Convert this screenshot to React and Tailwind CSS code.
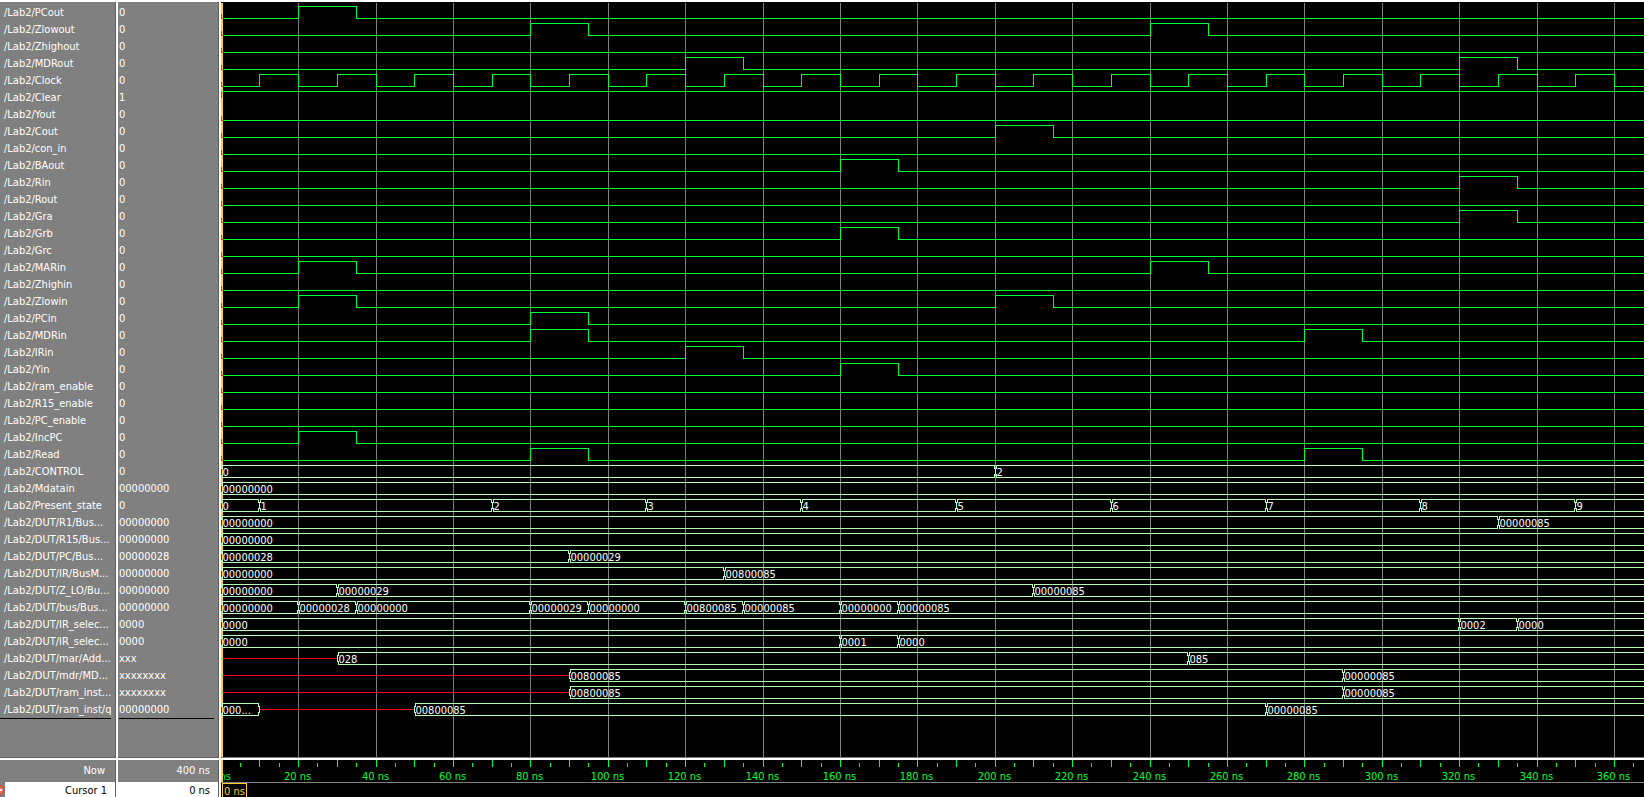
const X0 = 220.7;
const PX_PER_NS = 3.87;
const ROW = 17;
const END = 1100;

// Column of a time (in ns) on the plot, whose left edge is the cursor at 0 ns.
const tx = (t) => Math.round(X0 + PX_PER_NS * t) - 221;

const clockHigh = Array.from({ length: 30 }, (_, i) => [10 + i * 20, 20 + i * 20]);

const bit = (name, high = [], value = '0') => ({ name, value, kind: 'bit', high });
const bus = (name, value, segments) => ({ name, value, kind: 'bus', segments });

// A bus segment is [start in ns, text]; a null text means an undefined value.
const SIGNALS = [
  bit('/Lab2/PCout', [[20, 35]]),
  bit('/Lab2/Zlowout', [[80, 95], [240, 255]]),
  bit('/Lab2/Zhighout'),
  bit('/Lab2/MDRout', [[120, 135], [320, 335]]),
  bit('/Lab2/Clock', clockHigh),
  bit('/Lab2/Clear', [[0, END]], '1'),
  bit('/Lab2/Yout'),
  bit('/Lab2/Cout', [[200, 215]]),
  bit('/Lab2/con_in'),
  bit('/Lab2/BAout', [[160, 175]]),
  bit('/Lab2/Rin', [[320, 335]]),
  bit('/Lab2/Rout'),
  bit('/Lab2/Gra', [[320, 335]]),
  bit('/Lab2/Grb', [[160, 175]]),
  bit('/Lab2/Grc'),
  bit('/Lab2/MARin', [[20, 35], [240, 255]]),
  bit('/Lab2/Zhighin'),
  bit('/Lab2/Zlowin', [[20, 35], [200, 215]]),
  bit('/Lab2/PCin', [[80, 95]]),
  bit('/Lab2/MDRin', [[80, 95], [280, 295]]),
  bit('/Lab2/IRin', [[120, 135]]),
  bit('/Lab2/Yin', [[160, 175]]),
  bit('/Lab2/ram_enable'),
  bit('/Lab2/R15_enable'),
  bit('/Lab2/PC_enable'),
  bit('/Lab2/IncPC', [[20, 35]]),
  bit('/Lab2/Read', [[80, 95], [280, 295]]),
  bus('/Lab2/CONTROL', '0', [[0, '0'], [200, '2']]),
  bus('/Lab2/Mdatain', '00000000', [[0, '00000000']]),
  bus('/Lab2/Present_state', '0', [[0, '0'], [10, '1'], [70, '2'], [110, '3'], [150, '4'], [190, '5'], [230, '6'], [270, '7'], [310, '8'], [350, '9']]),
  bus('/Lab2/DUT/R1/Bus...', '00000000', [[0, '00000000'], [330, '00000085']]),
  bus('/Lab2/DUT/R15/Bus...', '00000000', [[0, '00000000']]),
  bus('/Lab2/DUT/PC/Bus...', '00000028', [[0, '00000028'], [90, '00000029']]),
  bus('/Lab2/DUT/IR/BusM...', '00000000', [[0, '00000000'], [130, '00800085']]),
  bus('/Lab2/DUT/Z_LO/Bu...', '00000000', [[0, '00000000'], [30, '00000029'], [210, '00000085']]),
  bus('/Lab2/DUT/bus/Bus...', '00000000', [[0, '00000000'], [20, '00000028'], [35, '00000000'], [80, '00000029'], [95, '00000000'], [120, '00800085'], [135, '00000085'], [160, '00000000'], [175, '00000085']]),
  bus('/Lab2/DUT/IR_selec...', '0000', [[0, '0000'], [320, '0002'], [335, '0000']]),
  bus('/Lab2/DUT/IR_selec...', '0000', [[0, '0000'], [160, '0001'], [175, '0000']]),
  bus('/Lab2/DUT/mar/Add...', 'xxx', [[0, null], [30, '028'], [250, '085']]),
  bus('/Lab2/DUT/mdr/MD...', 'xxxxxxxx', [[0, null], [90, '00800085'], [290, '00000085']]),
  bus('/Lab2/DUT/ram_inst...', 'xxxxxxxx', [[0, null], [90, '00800085'], [290, '00000085']]),
  bus('/Lab2/DUT/ram_inst/q', '00000000', [[0, '000...'], [10, null], [50, '00800085'], [270, '00000085']]),
];

function BitTrace({ high, y }) {
  const hi = y + 2;
  const lo = y + 14;
  const startsHigh = high[0]?.[0] === 0;
  let d = `M0 ${startsHigh ? hi : lo}`;
  for (const [a, b] of high) {
    if (a > 0) d += `H${tx(a)}V${hi}`;
    d += `H${tx(b)}`;
    if (b < END) d += `V${lo}`;
  }
  d += 'H9999';
  return (
    <>
      <path d={d} stroke="#00ff32" />
      <path d={startsHigh ? `M0 ${hi}V${hi + 6}` : `M0 ${lo - 5}V${lo}H2`} stroke="#ff3018" />
    </>
  );
}

function BusTrace({ segments, y }) {
  const hi = y + 2;
  const lo = y + 14;
  return segments.map(([start, text], i) => {
    const next = segments[i + 1];
    const a = tx(start);
    const b = next ? tx(next[0]) : 9999;
    if (text === null) {
      return (
        <g key={start}>
          <path d={`M${a} ${y + 8}H${b}`} stroke="#ff0010" />
          {start === 0 && <path d={`M0 ${y + 8}H2`} stroke="#00c830" />}
        </g>
      );
    }
    const l = a + 1;
    const r = b - 1;
    return (
      <g key={start}>
        <path
          d={`M${l} ${hi}V${hi + 3}M${l - 1} ${hi + 3}V${lo - 3}M${l} ${lo - 3}V${lo}M${l} ${hi}H${r}M${l} ${lo}H${r}M${r} ${hi}V${hi + 3}M${r + 1} ${hi + 3}V${lo - 3}M${r} ${lo - 3}V${lo}`}
          stroke="#b4ffb4"
          strokeLinecap="square"
        />
        {start === 0 && <path d={`M0 ${hi + 3}V${lo - 3}`} stroke="#4030c0" />}
        <text x={a + 1} y={y + 12} fill="#fff" stroke="none">{text}</text>
      </g>
    );
  });
}

function Plot() {
  const grid = Array.from({ length: 40 }, (_, i) => tx((i + 1) * 20));
  return (
    <svg className="block h-full w-full" role="img" aria-label="Waveforms" fontSize="11" fill="none" shapeRendering="crispEdges">
      <g transform="translate(0.5 0.5)">
        {grid.map((x) => (
          <path key={x} d={`M${x} 0V9999`} stroke="#808080" />
        ))}
        <rect x="-0.5" y="0.5" width="2" height="9999" fill="#ffcf26" />
        {SIGNALS.map((s, i) =>
          s.kind === 'bit' ? (
            <BitTrace key={i} high={s.high} y={2 + i * ROW} />
          ) : (
            <BusTrace key={i} segments={s.segments} y={2 + i * ROW} />
          ),
        )}
      </g>
    </svg>
  );
}

function Ruler() {
  const ticks = Array.from({ length: 120 }, (_, i) => i + 1);
  const labels = Array.from({ length: 19 }, (_, i) => i * 20);
  return (
    <svg className="block h-full w-full" role="img" aria-label="Time scale" fontSize="11" fill="none" shapeRendering="crispEdges">
      <g transform="translate(0.5 0)">
        {ticks.map((i) => (
          <path key={i} d={i % 2 ? `M${tx(i * 5)} 3V7` : `M${tx(i * 5)} 0V7`} stroke="#00ff32" />
        ))}
        {labels.map((t) => (
          <text key={t} x={tx(t) - 1} y="20" textAnchor="middle" fill="#00ff32">{`${t} ns`}</text>
        ))}
      </g>
      <rect x="0" y="0" width="2" height="22" fill="#ffcf26" />
    </svg>
  );
}

function SignalColumn({ items, className }) {
  return (
    <ul className={className}>
      {items.map((text, i) => (
        <li key={i} className="h-[17px] leading-[17px] whitespace-nowrap">{text}</li>
      ))}
    </ul>
  );
}

export default function App() {
  return (
    <main className="grid h-screen grid-cols-[116px_103px_minmax(0,1fr)] grid-rows-[minmax(0,1fr)_auto] overflow-hidden bg-white pt-0.5 font-['DejaVu_Sans_Condensed','DejaVu_Sans',sans-serif] text-[11px] text-white">
      <section aria-label="Signals" className="overflow-hidden border-r border-b border-[#606060] bg-[#808080] pt-0.5">
        <SignalColumn items={SIGNALS.map((s) => s.name)} className="mr-1 border-b border-black pl-1" />
      </section>
      <section aria-label="Values" className="ml-0.5 overflow-hidden border-r border-b border-[#606060] bg-[#808080] pt-0.5">
        <SignalColumn items={SIGNALS.map((s) => s.value)} className="mr-1 ml-px border-b border-black" />
      </section>
      <section className="ml-0.5 overflow-hidden border-b border-[#808080] bg-black">
        <Plot />
      </section>

      <footer className="col-span-3 grid grid-cols-[116px_103px_minmax(0,1fr)] pt-0.5 text-right">
        <div className="h-[22px] border-r border-[#606060] bg-[#808080] pr-2.5 leading-[22px]">Now</div>
        <div className="ml-0.5 h-[22px] border-r border-[#606060] bg-[#808080] pr-2 leading-[22px]">400 ns</div>
        <div className="ml-0.5 h-[22px] bg-black">
          <Ruler />
        </div>
        <div className="flex h-[15px] items-start border-r border-[#606060] pr-2 leading-[18px] text-black">
          <svg className="block h-[15px] w-[5px] bg-[#808080]" viewBox="0 0 5 15" aria-hidden="true">
            <circle cx="-0.5" cy="8" r="4.5" fill="#ec6a5c" stroke="#d04034" />
            <path d="M0 8H2" stroke="#fff" strokeWidth="2" />
          </svg>
          <span className="flex-1">Cursor 1</span>
        </div>
        <div className="ml-0.5 h-[15px] overflow-hidden border-r border-[#606060] pr-2 leading-[18px] text-black">0 ns</div>
        <div className="ml-0.5 h-[15px] overflow-hidden border-t border-[#808080] bg-black text-left">
          <span className="ml-px inline-block border border-[#ffcf26] px-px leading-4 text-[#ffcf26]">0 ns</span>
        </div>
      </footer>
    </main>
  );
}
